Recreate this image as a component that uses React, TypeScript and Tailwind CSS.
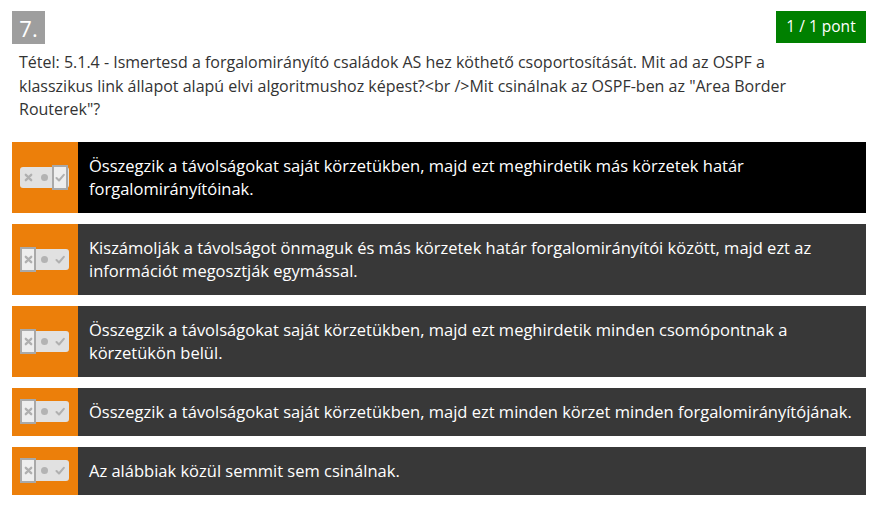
import React from "react";

const answers = [
  {
    text: "Összegzik a távolságokat saját körzetükben, majd ezt meghirdetik más körzetek határ forgalomirányítóinak.",
    checked: true,
    active: true,
  },
  {
    text: "Kiszámolják a távolságot önmaguk és más körzetek határ forgalomirányítói között, majd ezt az információt megosztják egymással.",
    checked: false,
  },
  {
    text: "Összegzik a távolságokat saját körzetükben, majd ezt meghirdetik minden csomópontnak a körzetükön belül.",
    checked: false,
  },
  {
    text: "Összegzik a távolságokat saját körzetükben, majd ezt minden körzet minden forgalomirányítójának.",
    checked: false,
  },
  {
    text: "Az alábbiak közül semmit sem csinálnak.",
    checked: false,
  },
];

function Toggle({ checked }: { checked: boolean }) {
  const cell = "w-[16px] h-[22px] flex items-center justify-center text-[11px] leading-none";
  const sel = "border-2 border-[#a9a9a9] bg-[#eeeeee] h-[25px] -my-[2px]";
  return (
    <div className="flex items-center h-[21px] bg-[#e1e1e1] rounded-[3px] w-[49px] text-[#b3b3b3]">
      <div className={`${cell} ${!checked ? sel : ""}`}>
        <svg width="9" height="9" viewBox="0 0 10 10">
          <path d="M2 2 L8 8 M8 2 L2 8" stroke="#b0b0b0" strokeWidth="2.6" strokeLinecap="round" />
        </svg>
      </div>
      <div className={cell}>
        <span className="w-[7px] h-[7px] rounded-full bg-[#b3b3b3] block" />
      </div>
      <div className={`${cell} ${checked ? sel : ""}`}>
        <svg width="10" height="9" viewBox="0 0 10 9">
          <path d="M1.5 5 L4 7.5 L8.8 1.8" stroke="#b0b0b0" strokeWidth="2" fill="none" strokeLinecap="round" strokeLinejoin="round" />
        </svg>
      </div>
    </div>
  );
}

export default function App() {
  return (
    <div className="w-[876px] h-[516px] bg-white px-3 pt-[11px]" style={{ fontFamily: '"Open Sans", sans-serif' }}>
      <div className="flex justify-between items-start">
        <div className="w-[33px] h-[33px] bg-[#9e9e9e] text-white text-[22px] flex items-center justify-center leading-none">
          7.
        </div>
        <div className="mr-[-2px] bg-[#008000] text-white text-[15.5px] h-[32px] w-[90px] flex items-center justify-center">
          1 / 1 pont
        </div>
      </div>
      <p className="text-[#333333] text-[16px] leading-[23.5px] px-[7px] mt-[7px] pr-[40px]">
        Tétel: 5.1.4 - Ismertesd a forgalomirányító családok AS hez köthető csoportosítását. Mit ad az OSPF a klasszikus link állapot alapú elvi algoritmushoz képest?&lt;br /&gt;Mit csinálnak az OSPF-ben az "Area Border Routerek"?
      </p>
      <div className="mt-[20px] flex flex-col gap-[11px] w-[854px]">
        {answers.map((a, i) => (
          <div key={i} className="flex">
            <div className="w-[66px] shrink-0 bg-[#ec7f0a] flex items-center justify-center pr-[1px]">
              <Toggle checked={a.checked} />
            </div>
            <div
              className={`flex-1 text-white text-[16.5px] leading-[23px] py-[12.5px] pl-[11px] pr-2 ${
                a.active ? "bg-black" : "bg-[#383838]"
              }`}
            >
              {a.text}
            </div>
          </div>
        ))}
      </div>
    </div>
  );
}
